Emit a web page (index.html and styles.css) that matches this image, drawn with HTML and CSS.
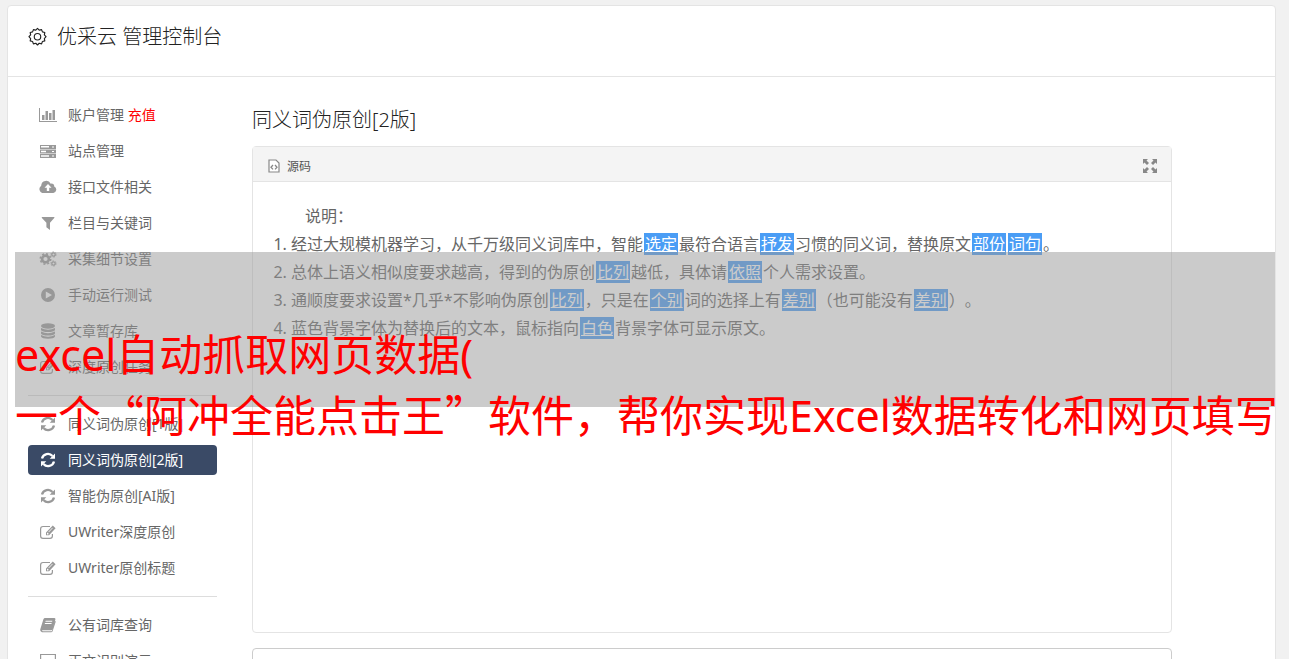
FILE: index.html
```html
<!DOCTYPE html>
<html lang="zh-CN">
<head>
  <meta charset="UTF-8" />
  <meta name="viewport" content="width=device-width, initial-scale=1.0" />
  <title>优采云 管理控制台</title>
  <link rel="stylesheet" href="styles.css">
</head>
<body>
  <!-- 图标 -->
  <svg class="sprite" aria-hidden="true">
    <symbol id="i-gear" viewBox="0 0 20 20">
      <path d="M10 1l1.800 1.800 2.500-.6.900 2.400 2.500.7-.5 2.500L19 9.700l-1.800 1.900.5 2.500-2.500.7-.9 2.400-2.500-.6L10 18.400l-1.800-1.800-2.500.6-.9-2.400-2.500-.7.500-2.500L1 9.700l1.800-1.900-.5-2.500 2.500-.7.900-2.400 2.500.6z" fill="none" stroke="currentColor" stroke-width="1.200" stroke-linejoin="round"/>
      <circle cx="10" cy="9.700" r="3.400" fill="none" stroke="currentColor" stroke-width="1.200"/>
    </symbol>
    <symbol id="i-chart" viewBox="0 0 18 16"><path d="M0 1h1v13h17v1H0zM3 8h2.500v5H3zM6.500 4H9v9H6.500zM10 6h2.500v7H10zM13.500 3H16v10h-2.500z"/></symbol>
    <symbol id="i-server" viewBox="0 0 18 16"><path fill-rule="evenodd" d="M1 2h16v4H1zM2 3v1.500h8V3zM13 3.500v1h2v-1zM1 6.500h16v4H1zM2 7.700v1.500h5V7.700zM13 8v1h2V8zM1 11h16v4H1zM2 12.300v1.500h8v-1.500zM13 12.500v1h2v-1z"/></symbol>
    <symbol id="i-cloud" viewBox="0 0 18 16"><path fill-rule="evenodd" d="M4.500 14A4 4 0 0 1 2.200 6.700 5 5 0 0 1 11.700 4.700 2.600 2.600 0 0 1 15.200 7.500 3.400 3.400 0 0 1 14.300 14zM9 5L5.500 8.700h2.300V12h2.400V8.700h2.300z"/></symbol>
    <symbol id="i-filter" viewBox="0 0 18 16"><path d="M3 2h12.200q.6.600 0 1.100L11 7.800V15L7.400 12.300V7.800L2.900 3.100Q2.400 2.500 3 2z"/></symbol>
    <symbol id="i-cogs" viewBox="0 0 18 16">
      <g fill="none" stroke="currentColor">
        <circle cx="6.500" cy="8" r="3.400" stroke-width="2.600"/>
        <circle cx="6.500" cy="8" r="5.200" stroke-width="1.600" stroke-dasharray="2 2.080"/>
        <circle cx="14.500" cy="3.500" r="1.700" stroke-width="1.300"/>
        <circle cx="14.500" cy="3.500" r="2.600" stroke-width="1" stroke-dasharray="1.300 1.420"/>
        <circle cx="14.500" cy="12.500" r="1.700" stroke-width="1.300"/>
        <circle cx="14.500" cy="12.500" r="2.600" stroke-width="1" stroke-dasharray="1.300 1.420"/>
      </g>
    </symbol>
    <symbol id="i-play" viewBox="0 0 18 16"><path fill-rule="evenodd" d="M9 1a7 7 0 1 1 0 14A7 7 0 0 1 9 1zM6.800 4.500v7L13 8z"/></symbol>
    <symbol id="i-database" viewBox="0 0 18 16">
      <ellipse cx="9" cy="3" rx="7" ry="2.700"/>
      <path d="M2 5q7 3.500 14 0v2Q15 9 9 9T2 7zM2 8.500q7 3.500 14 0v2q-1 2-7 2t-7-2zM2 12q7 3.500 14 0v1.500q-1 2.200-7 2.200t-7-2.200z"/>
    </symbol>
    <symbol id="i-edit" viewBox="0 0 18 16">
      <path d="M11 2.500H4Q1.600 2.500 1.600 5v7q0 2.400 2.400 2.400h7q2.400 0 2.400-2.400v-2" fill="none" stroke="currentColor" stroke-width="1.200"/>
      <path fill-rule="evenodd" d="M13.800 1.500l2.800 2.800-6.500 7H7V8.400zM8 9.200v1.200h1.200l.5-.6-1.200-1.200zM13.300 3.800l.4.400-3.900 4-.4-.4z"/>
    </symbol>
    <symbol id="i-refresh" viewBox="0 0 18 16">
      <path d="M3 6.500A6.100 6.100 0 0 1 13.500 4M15 9.500A6.100 6.100 0 0 1 4.500 12" fill="none" stroke="currentColor" stroke-width="2.300"/>
      <path d="M16 1.500v5.300h-5.300zM2 14.500V9.200h5.300z"/>
    </symbol>
    <symbol id="i-book" viewBox="0 0 18 16"><path fill-rule="evenodd" d="M6 1h9.500q1.200.3.900 1.500L13.500 12q-.4 1.200-1.500 1.200H3.300q-.8.700.5 1.100h9L16 4l.8.600L13.700 14q-.4 1.200-1.600 1.200H3q-2.200-.8-1.800-2.700L4.400 2.200Q5 1 6 1zM6.700 3.700l-.3 1h6.700l.3-1zM6 6l-.3 1h6.700l.3-1z"/></symbol>
    <symbol id="i-laptop" viewBox="0 0 18 16"><path d="M1.600 1.500h14.800v10H1.600zM0 14.500h18" fill="none" stroke="currentColor" stroke-width="1.200"/></symbol>
    <symbol id="i-source" viewBox="0 0 12 14">
      <path d="M1 1h7l3 3v9H1z" fill="#fff" stroke="currentColor" stroke-width="1.200"/>
      <path d="M5 6L3 8.200l2 2.200M7 6l2 2.200-2 2.200" fill="none" stroke="currentColor" stroke-width="1.300"/>
    </symbol>
    <symbol id="i-expand" viewBox="0 0 14 14"><path d="M0 0h5L3.500 1.500 6 4 4 6 1.500 3.500 0 5zM14 0v5l-1.500-1.500L10 6 8 4l2.500-2.500L9 0zM0 14V9l1.500 1.500L4 8l2 2-2.500 2.500L5 14zM14 14H9l1.500-1.500L8 10l2-2 2.500 2.500L14 9z"/></symbol>
  </svg>

  <div class="page">
    <header class="page-header">
      <svg class="gear"><use href="#i-gear"/></svg>
      <h1>优采云 管理控制台</h1>
    </header>

    <div class="content">
      <nav class="sidebar">
        <a href="#"><svg><use href="#i-chart"/></svg><span>账户管理 <em>充值</em></span></a>
        <a href="#"><svg><use href="#i-server"/></svg>站点管理</a>
        <a href="#"><svg><use href="#i-cloud"/></svg>接口文件相关</a>
        <a href="#"><svg><use href="#i-filter"/></svg>栏目与关键词</a>
        <a href="#"><svg><use href="#i-cogs"/></svg>采集细节设置</a>
        <a href="#"><svg><use href="#i-play"/></svg>手动运行测试</a>
        <a href="#"><svg><use href="#i-database"/></svg>文章暂存库</a>
        <a href="#"><svg><use href="#i-edit"/></svg>深度原创任务</a>
        <hr>
        <a href="#"><svg><use href="#i-refresh"/></svg>同义词伪原创[1版]</a>
        <a href="#" class="active"><svg><use href="#i-refresh"/></svg>同义词伪原创[2版]</a>
        <a href="#"><svg><use href="#i-refresh"/></svg>智能伪原创[AI版]</a>
        <a href="#"><svg><use href="#i-edit"/></svg>UWriter深度原创</a>
        <a href="#"><svg><use href="#i-edit"/></svg>UWriter原创标题</a>
        <hr>
        <a href="#"><svg><use href="#i-book"/></svg>公有词库查询</a>
        <a href="#"><svg><use href="#i-laptop"/></svg>正文识别演示</a>
      </nav>

      <main class="main">
        <h2>同义词伪原创[2版]</h2>
        <section class="editor">
          <div class="toolbar">
            <button type="button"><svg class="source"><use href="#i-source"/></svg>源码</button>
            <button type="button" aria-label="全屏"><svg class="expand"><use href="#i-expand"/></svg></button>
          </div>
          <div class="editor-body">
            <p>说明：</p>
            <ol>
              <li>经过大规模机器学习，从千万级同义词库中，智能<a href="#">选定</a>最符合语言<a href="#">抒发</a>习惯的同义词，替换原文<a href="#">部份</a><a href="#">词句</a>。</li>
              <li>总体上语义相似度要求越高，得到的伪原创<a href="#">比列</a>越低，具体请<a href="#">依照</a>个人需求设置。</li>
              <li>通顺度要求设置*几乎*不影响伪原创<a href="#">比列</a>，只是在<a href="#">个别</a>词的选择上有<a href="#">差别</a>（也可能没有<a href="#">差别</a>）。</li>
              <li>蓝色背景字体为替换后的文本，鼠标指向<a href="#">白色</a>背景字体可显示原文。</li>
            </ol>
          </div>
        </section>
        <textarea class="result" aria-label="结果"></textarea>
      </main>
    </div>
  </div>

  <div class="caption">
    <div>excel自动抓取网页数据(</div>
    <div>一个<span class="quote">“</span>阿冲全能点击王<span class="quote">”</span>软件，帮你实现Excel数据转化和网页填写</div>
  </div>
</body>
</html>
```
FILE: styles.css
```css
:root {
  --bg: #f1f1f1;
  --line: #e4e4e4;
  --text: #666;
  --title: #222;
  --icon: #999;
  --active: #3a4a66;
  --mark: #4a9df5;
}

* {
  box-sizing: border-box;
}

body {
  margin: 0;
  height: 100vh;
  overflow: hidden;
  position: relative;
  background-color: var(--bg);
  color: var(--text);
  font-family: "Noto Sans", "Noto Sans CJK SC", sans-serif;
  font-size: 14px;
  text-spacing-trim: space-all;
}

svg {
  fill: currentColor;
}

.sprite {
  display: none;
}

.page {
  margin: 5px 13px 0 7px;
  background: #fff;
  border: 1px solid var(--line);
  border-radius: 4px;
}

.page-header {
  display: flex;
  align-items: center;
  gap: 10px;
  height: 71px;
  padding: 0 20px 8px;
  border-bottom: 1px solid var(--line);
  color: var(--title);
}

.gear {
  width: 19px;
  height: 20px;
}

h1,
h2 {
  margin: 0;
  color: var(--title);
  font-size: 20px;
  font-weight: 300;
  line-height: 28px;
}

.content {
  display: flex;
  gap: 35px;
  padding: 23px 20px 0;
}

.sidebar {
  flex: 0 0 189px;
  display: flex;
  flex-direction: column;
  gap: 6px;
}

.sidebar a {
  display: flex;
  align-items: center;
  gap: 11px;
  height: 30px;
  padding-left: 11px;
  border-radius: 4px;
  color: var(--text);
  line-height: 30px;
  text-decoration: none;
  white-space: nowrap;
}

.sidebar svg {
  width: 18px;
  height: 16px;
  color: var(--icon);
}

.sidebar em {
  color: #f00;
  font-style: normal;
}

.sidebar .active,
.sidebar .active svg {
  color: #fff;
}

.sidebar .active {
  background: var(--active);
}

.sidebar hr {
  width: 100%;
  height: 1px;
  margin: 7px 0;
  border: 0;
  background: #ddd;
}

.main {
  flex: 1;
  max-width: 920px;
  padding-top: 6px;
}

.editor {
  margin-top: 12px;
  border: 1px solid var(--line);
  border-radius: 4px;
}

.toolbar {
  display: flex;
  justify-content: space-between;
  align-items: center;
  height: 35px;
  padding: 3px 14px 0 15px;
  background: #f4f4f4;
  border-bottom: 1px solid var(--line);
}

.toolbar button {
  display: flex;
  align-items: center;
  gap: 7px;
  padding: 0;
  border: 0;
  background: none;
  color: #555;
  font: inherit;
  font-size: 12px;
}

.toolbar svg {
  color: #888;
}

.source {
  width: 12px;
  height: 14px;
}

.expand {
  width: 14px;
  height: 14px;
}

.editor-body {
  min-height: 450px;
  padding: 20px;
  font-size: 16px;
  line-height: 28px;
}

.editor-body p {
  margin: 0;
  text-indent: 2em;
}

.editor-body ol {
  margin: 0;
  padding-left: 18px;
}

.editor-body a {
  margin: 0 1px;
  padding: 0 1px;
  background: var(--mark);
  color: #fff;
}

.result {
  display: block;
  width: 100%;
  height: 120px;
  margin-top: 15px;
  border: 1px solid #ccc;
  border-radius: 4px;
  resize: none;
}

/* 叠加在页面上的标题 */
.caption {
  position: absolute;
  top: 252px;
  left: 15px;
  right: 14px;
  height: 155px;
  padding-top: 74px;
  background: rgba(151, 151, 151, 0.5);
  color: #f00;
  font-size: 43px;
  line-height: 58px;
  white-space: nowrap;
}

.quote {
  font-family: "Noto Sans CJK SC", sans-serif;
}
```
